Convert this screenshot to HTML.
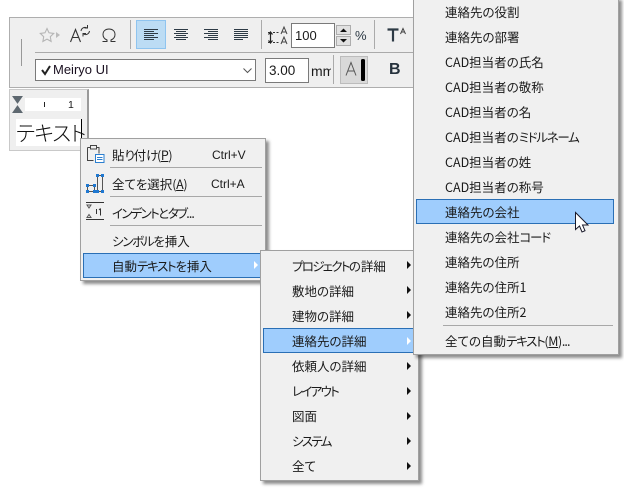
<!DOCTYPE html>
<html lang="ja"><head><meta charset="utf-8">
<style>
html,body{margin:0;padding:0;background:#fff}
#p{position:relative;width:624px;height:492px;overflow:hidden;background:#fff;font-family:"Liberation Sans","Noto Sans CJK JP",sans-serif;color:#111}
#p div,#p span{position:absolute;box-sizing:border-box}
.m{background:#f0f0f0;border:1px solid #a0a0a0;box-shadow:3px 3px 3px rgba(0,0,0,.45)}
.t{font-size:12.5px;line-height:18px;height:18px;white-space:nowrap;font-feature-settings:"palt";font-family:"Noto Sans CJK JP","Liberation Sans",sans-serif;color:#1a1a1a}
.l{font-family:"Liberation Sans",sans-serif}
.h{background:#9fcdfd;border:1px solid #2a6fb5}
.s{height:1px;background:#a8a8a8}
.a{width:0;height:0;border-left:4px solid #111;border-top:4px solid transparent;border-bottom:4px solid transparent}
u{text-decoration:underline}
i{font-style:normal}
.k{letter-spacing:-1.3px}
.k2{letter-spacing:-1.7px}
.d{letter-spacing:-.9px}
.q{letter-spacing:-.4px}
svg{position:absolute;overflow:visible}
</style></head><body><div id="p">

<!-- toolbar -->
<div style="left:9px;top:17px;width:410px;height:71px;background:#efefef;border:1px solid #aeaeae"></div>
<div style="left:21px;top:39px;width:1px;height:27px;background:#999"></div>
<div style="left:35px;top:52px;width:380px;height:1px;background:#aaa"></div>
<div style="left:130px;top:20px;width:1px;height:29px;background:#aaa"></div>
<div style="left:261px;top:20px;width:1px;height:29px;background:#aaa"></div>
<div style="left:374px;top:20px;width:1px;height:29px;background:#aaa"></div>
<div style="left:333px;top:55px;width:1px;height:29px;background:#aaa"></div>

<div style="left:35px;top:59px;width:221px;height:22px;background:#fff;border:1px solid #7a7a7a"></div>
<div style="left:291px;top:23px;width:44px;height:25px;background:#fff;border:1px solid #7a7a7a"></div>
<div style="left:265px;top:58px;width:44px;height:25px;background:#fff;border:1px solid #7a7a7a"></div>

<svg style="left:0;top:0" width="420" height="90">
 <path d="M47 28.500l2 4.300 4.700.6-3.400 3.300.8 4.700-4.100-2.300-4.100 2.300.8-4.700-3.400-3.300 4.700-.6z" fill="none" stroke="#b5b5b5" stroke-width="1.100"/>
 <path d="M56 32l4 3-4 3z" fill="#bbb"/>
 <path d="M70.500 42l5-12.500 5 12.500M72.500 37.500h6" fill="none" stroke="#333" stroke-width="1.100"/>
 <path d="M81 31c.5-3 3.500-4.500 6-3M87.500 25v3h-3M89.500 31c-.5 3-3.500 4.500-6 3M83 36.500v-3h3" fill="none" stroke="#333" stroke-width="1"/>
 <path d="M102.500 41.500h4.500v-1.500c-2.500-1-4-3-4-5.500 0-3.500 2.500-5.500 6-5.500s6 2 6 5.500c0 2.500-1.500 4.500-4 5.500v1.500h4.500" fill="none" stroke="#333" stroke-width="1"/>
 <!-- align -->
 <rect x="136.500" y="20.500" width="29" height="28" fill="#bcdcf4" stroke="#8fc4ef"/>
 <g stroke="#2d3a45" stroke-width="1">
  <path d="M144 29.500h14M144 31.500h10M144 33.500h14M144 35.500h10M144 37.500h14M144 39.500h10"/>
  <path d="M174 29.500h14M176 31.500h10M174 33.500h14M176 35.500h10M174 37.500h14M176 39.500h10"/>
  <path d="M204 29.500h14M208 31.500h10M204 33.500h14M208 35.500h10M204 37.500h14M208 39.500h10"/>
  <path d="M234 29.500h14M234 31.500h14M234 33.500h14M234 35.500h14M234 37.500h14M234 39.500h9"/>
 </g>
 <!-- spacing -->
 <path d="M270.500 33v9M268.500 34.500l2-2.500 2 2.500M268.500 40.500l2 2.500 2-2.500" fill="none" stroke="#222" stroke-width="1.200"/>
 <path d="M268 32.500h2M268 42.500h2M273 32.500h7M273 42.500h7" stroke="#333" stroke-dasharray="2 1.500"/>
 <path d="M281 34l3-7 3 7M282 32h4M281 44l3-7 3 7M282 42h4" fill="none" stroke="#444"/>
 <!-- stepper -->
 <rect x="336.500" y="25.500" width="14" height="9" fill="#e1e1e1" stroke="#adadad"/>
 <rect x="336.500" y="36.500" width="14" height="9" fill="#e1e1e1" stroke="#adadad"/>
 <path d="M340 32l3.500-3.500 3.500 3.500zM340 39h7l-3.500 3.500z" fill="#111"/>
 <!-- T A -->
 <path d="M387.500 29.500h11M393 29.500v12" stroke="#2d3a45" stroke-width="2.200" fill="none"/>
 <path d="M400.500 34l2.500-5.500 2.500 5.500M401.500 32h3" stroke="#444" fill="none"/>
 <!-- chevron -->
 <path d="M243.500 68.500l4 4 4-4" stroke="#555" fill="none"/>
 <!-- A | -->
 <rect x="340.500" y="56.500" width="27" height="27" fill="#d9d9d9" stroke="#bcbcbc"/>
 <path d="M346 75.500l5-13 5 13M348 71h6" stroke="#555" fill="none" stroke-width="1"/>
 <rect x="361" y="59" width="4" height="22" rx="1.500" fill="#000"/>
 <!-- check -->
 <path d="M42 70l3 4 5-8" fill="none" stroke="#222" stroke-width="2"/>
</svg>
<div class="t l" style="left:389px;top:61px;font-size:16px;font-weight:bold;color:#26323d">B</div>

<div class="t l" style="left:53px;top:61px;font-size:13px;color:#1a1020">Meiryo UI</div>
<div class="t l" style="left:295px;top:27px;font-size:13px">100</div>
<div class="t l" style="left:355px;top:27px;font-size:13px;color:#2d3a45">%</div>
<div class="t l" style="left:269px;top:62px;font-size:13.500px">3.00</div>
<div style="left:311px;top:62px;width:20px;height:18px;overflow:hidden"><span class="t l" style="left:0;top:0;font-size:14px">mm</span></div>

<!-- text block -->
<div style="left:9px;top:89px;width:80px;height:62px;background:#efefef;border:1px solid #c9c9c9;border-right:2px solid #9a9a9a"></div>
<div style="left:25px;top:98px;width:56px;height:13px;background:#fff"></div>
<div style="left:16px;top:119px;width:66px;height:27px;background:#fff"></div>
<svg style="left:0;top:0" width="90" height="120">
 <path d="M13 96.500h9l-4.500 6.500zM13 112.500h9l-4.500-6.500z" fill="#5e6870" stroke="#5e6870"/>
 <path d="M44.500 102v5" stroke="#222"/>
</svg>
<div class="t l" style="left:68px;top:96px;font-size:10.500px">1</div>
<div class="t" style="left:16px;top:120px;height:26px;line-height:26px;font-size:21px;font-weight:300;letter-spacing:-.9px;color:#111">テキスト</div>
<div style="left:81px;top:119px;width:1px;height:21px;background:#000"></div>

<!-- menu 1 -->
<div class="m" style="left:80px;top:138px;width:186px;height:143px"></div>
<div class="h" style="left:83px;top:253px;width:180px;height:25px"></div>
<div class="s" style="left:110px;top:167px;width:152px"></div>
<div class="s" style="left:110px;top:196px;width:152px"></div>
<div class="s" style="left:110px;top:225px;width:152px"></div>
<svg style="left:0;top:0" width="110" height="230">
 <path d="M87.500 147.500h3M96.500 147.500h2.500v6M93.500 160.500h-6v-13" fill="none" stroke="#444"/>
 <rect x="90.500" y="145.500" width="6" height="3.500" fill="#f0f0f0" stroke="#444"/>
 <rect x="95.500" y="154.500" width="8.500" height="8" fill="#fff" stroke="#2b7fd0"/>
 <path d="M97 157.500h5.500M97 159.500h5.500" stroke="#2b7fd0"/>
 <rect x="87.500" y="185.500" width="7" height="6" fill="none" stroke="#555"/>
 <rect x="97.500" y="175.500" width="5" height="16" fill="none" stroke="#555"/>
 <g fill="#1f78d1">
  <rect x="86" y="184" width="3" height="3"/><rect x="93" y="184" width="3" height="3"/>
  <rect x="86" y="190" width="3" height="3"/><rect x="93" y="190" width="3" height="3"/>
  <rect x="96" y="174" width="3" height="3"/><rect x="101" y="174" width="3" height="3"/>
  <rect x="96" y="190" width="3" height="3"/><rect x="101" y="190" width="3" height="3"/>
 </g>
 <path d="M86 202.500h18M86 219.500h18" stroke="#333"/>
 <path d="M87 205h4l-2 3zM87 217.500h4l-2-3z" fill="none" stroke="#555"/>
 <path d="M96.500 209v5M100.500 208.500v7M99 210l1.500-1.500" stroke="#333" fill="none"/>
</svg>
<div class="t" style="left:112px;top:146px">貼<i class="k">り</i>付<i class="k">け</i><i class="q">(<u>P</u>)</i></div>
<div class="t l" style="left:212px;top:146px;font-size:12px">Ctrl+V</div>
<div class="t" style="left:112px;top:175px">全てを選択<i class="q">(<u>A</u>)</i></div>
<div class="t l" style="left:211px;top:175px;font-size:12px">Ctrl+A</div>
<div class="t" style="left:112px;top:204px"><i class="k2">インデント</i><i class="k">と</i><i class="k2">タブ</i><i class="d">...</i></div>
<div class="t" style="left:112px;top:232px"><i class="k">シンボル</i>を挿入</div>
<div class="t" style="left:112px;top:257px">自動<i class="k">テキスト</i>を挿入</div>
<div class="a" style="left:254px;top:261px;border-left-color:#fff"></div>

<!-- menu 2 -->
<div class="m" style="left:260px;top:250px;width:159px;height:231px"></div>
<div class="h" style="left:263px;top:328px;width:153px;height:25px"></div>
<div class="t" style="left:292px;top:257px"><i class="k2">プロジェクト</i>の詳細</div><div class="a" style="left:407px;top:261px"></div>
<div class="t" style="left:292px;top:282px">敷地の詳細</div><div class="a" style="left:407px;top:286px"></div>
<div class="t" style="left:292px;top:307px">建物の詳細</div><div class="a" style="left:407px;top:311px"></div>
<div class="t" style="left:292px;top:332px">連絡先の詳細</div><div class="a" style="left:407px;top:337px;border-left-color:#fff"></div>
<div class="t" style="left:292px;top:357px">依頼人の詳細</div><div class="a" style="left:407px;top:362px"></div>
<div class="t" style="left:292px;top:382px"><i class="k2">レイアウト</i></div><div class="a" style="left:407px;top:387px"></div>
<div class="t" style="left:292px;top:407px">図面</div><div class="a" style="left:407px;top:412px"></div>
<div class="t" style="left:292px;top:432px"><i class="k2">システム</i></div><div class="a" style="left:407px;top:437px"></div>
<div class="t" style="left:292px;top:457px">全て</div><div class="a" style="left:407px;top:462px"></div>

<!-- menu 3 -->
<div class="m" style="left:413px;top:-3px;width:206px;height:358px"></div>
<div class="h" style="left:416px;top:199px;width:198px;height:25px"></div>
<div class="s" style="left:443px;top:325px;width:170px"></div>
<div class="t" style="left:445px;top:3px">連絡先の役割</div>
<div class="t" style="left:445px;top:28px">連絡先の部署</div>
<div class="t" style="left:445px;top:53px">CAD担当者の氏名</div>
<div class="t" style="left:445px;top:78px">CAD担当者の敬称</div>
<div class="t" style="left:445px;top:103px">CAD担当者の名</div>
<div class="t" style="left:445px;top:128px">CAD担当者の<i class="k">ミドルネーム</i></div>
<div class="t" style="left:445px;top:153px">CAD担当者の姓</div>
<div class="t" style="left:445px;top:178px">CAD担当者の称号</div>
<div class="t" style="left:445px;top:203px">連絡先の会社</div>
<div class="t" style="left:445px;top:228px">連絡先の会社<i class="k">コード</i></div>
<div class="t" style="left:445px;top:253px">連絡先の住所</div>
<div class="t" style="left:445px;top:278px">連絡先の住所1</div>
<div class="t" style="left:445px;top:303px">連絡先の住所2</div>
<div class="t" style="left:445px;top:332px">全ての自動<i class="k">テキスト</i><i class="q">(<u>M</u>)</i><i class="d">...</i></div>

<!-- cursor -->
<svg style="left:0;top:0" width="624" height="300">
 <path d="M575.500 212.500v17l4-3.500 2.500 6 3-1.300-2.500-5.700h5.500z" fill="#fff" stroke="#1a1a2a" stroke-width="1"/>
</svg>
</div></body></html>
